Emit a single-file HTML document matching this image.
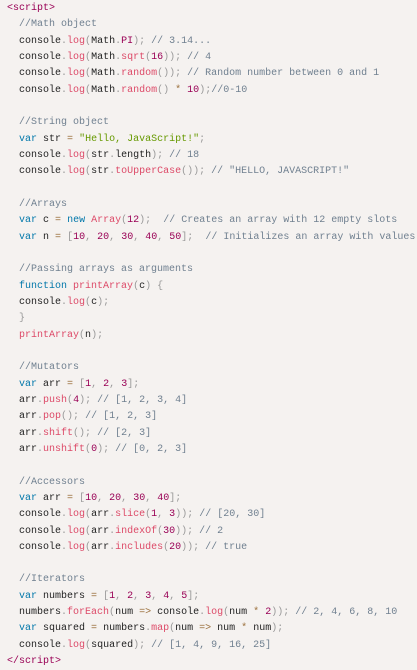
<!DOCTYPE html>
<html><head><meta charset="utf-8"><style>
html,body{margin:0;padding:0;background:#f5f2f0;width:417px;height:667px;overflow:hidden}
pre{margin:0;padding:0 0 0 7px;font-family:"Liberation Mono",monospace;font-size:10px;line-height:16.33px;color:#222;position:absolute;top:1px;left:0;white-space:pre}
.t{color:#905}.c{color:#708090}.p{color:#999}.f{color:#DD4A68}.n{color:#905}.k{color:#07a}.s{color:#690}.o{color:#9a6e3a}
</style></head><body><pre><span class="t">&lt;script&gt;</span>
  <span class="c">//Math object</span>
  console<span class="p">.</span><span class="f">log</span><span class="p">(</span>Math<span class="p">.</span><span class="n">PI</span><span class="p">);</span> <span class="c">// 3.14...</span>
  console<span class="p">.</span><span class="f">log</span><span class="p">(</span>Math<span class="p">.</span><span class="f">sqrt</span><span class="p">(</span><span class="n">16</span><span class="p">));</span> <span class="c">// 4</span>
  console<span class="p">.</span><span class="f">log</span><span class="p">(</span>Math<span class="p">.</span><span class="f">random</span><span class="p">());</span> <span class="c">// Random number between 0 and 1</span>
  console<span class="p">.</span><span class="f">log</span><span class="p">(</span>Math<span class="p">.</span><span class="f">random</span><span class="p">()</span> <span class="o">*</span> <span class="n">10</span><span class="p">);</span><span class="c">//0-10</span>

  <span class="c">//String object</span>
  <span class="k">var</span> str <span class="o">=</span> <span class="s">"Hello, JavaScript!"</span><span class="p">;</span>
  console<span class="p">.</span><span class="f">log</span><span class="p">(</span>str<span class="p">.</span>length<span class="p">);</span> <span class="c">// 18</span>
  console<span class="p">.</span><span class="f">log</span><span class="p">(</span>str<span class="p">.</span><span class="f">toUpperCase</span><span class="p">());</span> <span class="c">// "HELLO, JAVASCRIPT!"</span>

  <span class="c">//Arrays</span>
  <span class="k">var</span> c <span class="o">=</span> <span class="k">new</span> <span class="f">Array</span><span class="p">(</span><span class="n">12</span><span class="p">);</span>  <span class="c">// Creates an array with 12 empty slots</span>
  <span class="k">var</span> n <span class="o">=</span> <span class="p">[</span><span class="n">10</span><span class="p">,</span> <span class="n">20</span><span class="p">,</span> <span class="n">30</span><span class="p">,</span> <span class="n">40</span><span class="p">,</span> <span class="n">50</span><span class="p">];</span>  <span class="c">// Initializes an array with values</span>

  <span class="c">//Passing arrays as arguments</span>
  <span class="k">function</span> <span class="f">printArray</span><span class="p">(</span>c<span class="p">)</span> <span class="p">{</span>
  console<span class="p">.</span><span class="f">log</span><span class="p">(</span>c<span class="p">);</span>
  <span class="p">}</span>
  <span class="f">printArray</span><span class="p">(</span>n<span class="p">);</span>

  <span class="c">//Mutators</span>
  <span class="k">var</span> arr <span class="o">=</span> <span class="p">[</span><span class="n">1</span><span class="p">,</span> <span class="n">2</span><span class="p">,</span> <span class="n">3</span><span class="p">];</span>
  arr<span class="p">.</span><span class="f">push</span><span class="p">(</span><span class="n">4</span><span class="p">);</span> <span class="c">// [1, 2, 3, 4]</span>
  arr<span class="p">.</span><span class="f">pop</span><span class="p">();</span> <span class="c">// [1, 2, 3]</span>
  arr<span class="p">.</span><span class="f">shift</span><span class="p">();</span> <span class="c">// [2, 3]</span>
  arr<span class="p">.</span><span class="f">unshift</span><span class="p">(</span><span class="n">0</span><span class="p">);</span> <span class="c">// [0, 2, 3]</span>

  <span class="c">//Accessors</span>
  <span class="k">var</span> arr <span class="o">=</span> <span class="p">[</span><span class="n">10</span><span class="p">,</span> <span class="n">20</span><span class="p">,</span> <span class="n">30</span><span class="p">,</span> <span class="n">40</span><span class="p">];</span>
  console<span class="p">.</span><span class="f">log</span><span class="p">(</span>arr<span class="p">.</span><span class="f">slice</span><span class="p">(</span><span class="n">1</span><span class="p">,</span> <span class="n">3</span><span class="p">));</span> <span class="c">// [20, 30]</span>
  console<span class="p">.</span><span class="f">log</span><span class="p">(</span>arr<span class="p">.</span><span class="f">indexOf</span><span class="p">(</span><span class="n">30</span><span class="p">));</span> <span class="c">// 2</span>
  console<span class="p">.</span><span class="f">log</span><span class="p">(</span>arr<span class="p">.</span><span class="f">includes</span><span class="p">(</span><span class="n">20</span><span class="p">));</span> <span class="c">// true</span>

  <span class="c">//Iterators</span>
  <span class="k">var</span> numbers <span class="o">=</span> <span class="p">[</span><span class="n">1</span><span class="p">,</span> <span class="n">2</span><span class="p">,</span> <span class="n">3</span><span class="p">,</span> <span class="n">4</span><span class="p">,</span> <span class="n">5</span><span class="p">];</span>
  numbers<span class="p">.</span><span class="f">forEach</span><span class="p">(</span>num <span class="o">=&gt;</span> console<span class="p">.</span><span class="f">log</span><span class="p">(</span>num <span class="o">*</span> <span class="n">2</span><span class="p">));</span> <span class="c">// 2, 4, 6, 8, 10</span>
  <span class="k">var</span> squared <span class="o">=</span> numbers<span class="p">.</span><span class="f">map</span><span class="p">(</span>num <span class="o">=&gt;</span> num <span class="o">*</span> num<span class="p">);</span>
  console<span class="p">.</span><span class="f">log</span><span class="p">(</span>squared<span class="p">);</span> <span class="c">// [1, 4, 9, 16, 25]</span>
<span class="t">&lt;/script&gt;</span></pre></body></html>
